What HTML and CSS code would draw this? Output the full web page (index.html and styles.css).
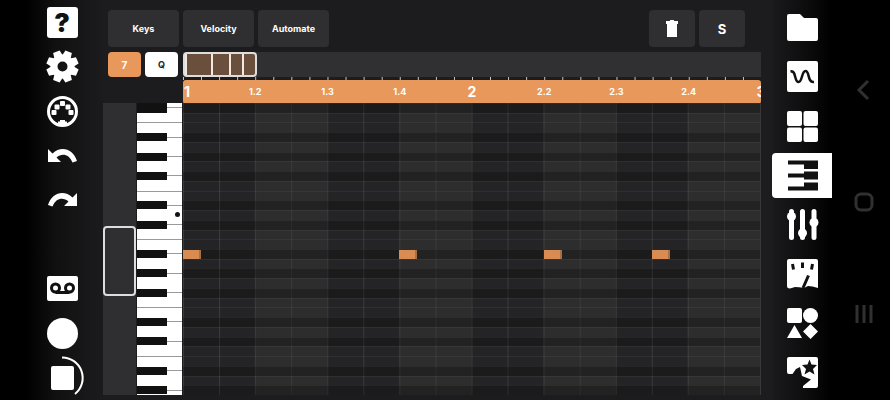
FILE: index.html
```
<!DOCTYPE html>
<html lang="en">
<head>
  <meta charset="UTF-8">
  <meta name="viewport" content="width=device-width, initial-scale=1">
  <title>Piano Roll</title>
  <link rel="stylesheet" href="styles.css">
</head>
<body>
  <div class="app">

    <nav class="tools" aria-label="Tools">
      <button aria-label="Help"><span class="help">?</span></button>
      <button aria-label="Settings">
        <svg viewBox="-15.500 -15.500 31 31">
          <circle class="line" r="8.500" stroke-width="7"/>
          <g id="teeth">
            <path id="tooth" transform="rotate(22.500)" d="M-4.500-10-3.500-16h7L4.500-10z"/>
            <use href="#tooth" transform="rotate(45)"/>
            <use href="#tooth" transform="rotate(90)"/>
            <use href="#tooth" transform="rotate(135)"/>
          </g>
          <use href="#teeth" transform="rotate(180)"/>
        </svg>
      </button>
      <button aria-label="MIDI">
        <svg viewBox="0 0 31 31">
          <circle class="line" cx="15.500" cy="15.500" r="14" stroke-width="3"/>
          <path d="M11 29v-3.500h2V24h5v1.500h2V29z"/>
          <rect x="13" y="5" width="5" height="5" rx="1"/>
          <rect x="7.500" y="8.500" width="5" height="5" rx="1"/>
          <rect x="18.500" y="8.500" width="5" height="5" rx="1"/>
          <rect x="4.500" y="14" width="5" height="5" rx="1"/>
          <rect x="21.500" y="14" width="5" height="5" rx="1"/>
        </svg>
      </button>
      <button aria-label="Undo">
        <svg viewBox="0 0 31 31"><path d="M1 9v13h13l-4.500-4.500c5-4.500 12.500-4 16 5l4.500-1.500C26 8.500 14 5.500 5.500 13.500z"/></svg>
      </button>
      <button aria-label="Redo">
        <svg viewBox="0 0 31 31"><path d="M30 9v13H17l4.500-4.500c-5-4.500-12.500-4-16 5L1 21C5 8.500 17 5.500 25.500 13.500z"/></svg>
      </button>
      <button class="tape" aria-label="Recordings">
        <svg viewBox="0 0 31 31">
          <rect y="3" width="31" height="25" rx="2"/>
          <g class="cut-line" stroke-width="3"><circle cx="8.500" cy="15" r="4"/><circle cx="22.500" cy="15" r="4"/><path d="M8.500 19.500h14"/></g>
        </svg>
      </button>
      <button class="record" aria-label="Record">
        <svg viewBox="0 0 31 31"><circle cx="15.500" cy="15.500" r="15.500"/></svg>
      </button>
      <button class="stop" aria-label="Stop">
        <svg viewBox="0 0 31 31"><rect x="4" y="4" width="23" height="24" rx="2"/><path class="line" stroke-width="2" d="M15-4.500A20.500 20.500 0 0 1 28 32"/></svg>
      </button>
    </nav>

    <main class="editor">
      <header class="actions">
        <button class="btn wide">Keys</button>
        <button class="btn wide">Velocity</button>
        <button class="btn wide">Automate</button>
        <button class="btn push" aria-label="Delete">
          <svg class="trash" viewBox="0 0 12 18"><path d="M4 0h4v1h4v3H0V1h4zM1 4h10v13H1z"/></svg>
        </button>
        <button class="btn">S</button>
      </header>

      <div class="overview">
        <button class="chip orange">7</button>
        <button class="chip">Q</button>
        <div class="overview-track">
          <div class="overview-window" id="overview"></div>
        </div>
      </div>

      <div class="ruler">
        <div class="ticks"></div>
        <div class="beats" id="beats"></div>
      </div>

      <div class="roll">
        <div class="scroll"><div class="scroll-thumb"></div></div>
        <div class="keys" id="keys"></div>
        <div class="grid" id="grid"></div>
      </div>
    </main>

    <nav class="views" aria-label="Views">
      <button aria-label="Files">
        <svg viewBox="0 0 31 31"><path d="M2 2h11l4 4h12q2 0 2 2v19q0 2-2 2H2q-2 0-2-2V4q0-2 2-2z"/></svg>
      </button>
      <button aria-label="Sample">
        <svg viewBox="0 0 31 31"><rect width="31" height="31" rx="2"/><path class="cut-line" stroke-width="2.500" d="M3.500 10.500c6-1.500 3.500 10.500 8 10.500 4 0 3-11 7-11 4.500 0 1.500 12 8.500 11"/></svg>
      </button>
      <button aria-label="Pads">
        <svg viewBox="0 0 31 31"><rect width="15" height="15" rx="2"/><rect x="16.500" width="14.500" height="15" rx="2"/><rect y="16.500" width="15" height="14.500" rx="2"/><rect x="16.500" y="16.500" width="14.500" height="14.500" rx="2"/></svg>
      </button>
      <button class="active" aria-label="Piano roll">
        <svg viewBox="0 0 31 31"><path class="cut" d="M1 .5h30V9H17V4.500H1zM1 13.500h16v-2h14v8H17v-2H1zM1 26.500h16v-4h14v8H1z"/></svg>
      </button>
      <button aria-label="Mixer">
        <svg viewBox="0 0 31 31">
          <path class="line" stroke-width="5" stroke-linecap="round" d="M4.500 2.500v26M15.500 2.500v26M27 2.500v26"/>
          <circle cx="4.500" cy="7.500" r="4.500"/><circle cx="15.500" cy="24" r="4.500"/><circle cx="27" cy="13.500" r="4.500"/>
        </svg>
      </button>
      <button aria-label="Effects">
        <svg viewBox="0 0 31 31"><path d="M2 1h27q2 0 2 2v27q-6-2-10-2l-4 2q-5-1-9-1l-5 1.500q-3 0-3-2.500V3q0-2 2-2z"/><path class="cut-line" stroke-width="3" d="M5.500 6l1 5.500M15.500 4.500v5.500M25.500 6l-1 5.500M21.500 17.500L16 30"/></svg>
      </button>
      <button aria-label="Instruments">
        <svg viewBox="0 0 31 31"><rect width="15" height="15" rx="2"/><circle cx="23.500" cy="7.500" r="7.500"/><path d="M7.500 17 15 30H0zM23.500 16 31 23.500 23.500 31 16 23.500z"/></svg>
      </button>
      <button aria-label="Presets">
        <svg viewBox="0 0 31 31"><path d="M2 0h27q2 0 2 2v27q0 2-2 2H16v-2l8-6.500-9-3.500-2-9-4 2-3.500 5H2q-2 0-2-2V2q0-2 2-2z"/><path class="cut" d="M22.500 2.500l2 5 5.500.5-4 4 1.500 5.500-5-3-5 3 1.500-5.500-4-4 5.500-.5z"/></svg>
      </button>
    </nav>

    <nav class="system" aria-label="System">
      <button aria-label="Back"><svg viewBox="0 0 20 20"><path d="M14 1 5 10l9 9"/></svg></button>
      <button aria-label="Home"><svg viewBox="0 0 20 20"><rect x="2" y="2" width="16" height="16" rx="5"/></svg></button>
      <button aria-label="Recents"><svg viewBox="0 0 20 20"><path d="M3 1v18M10 1v18M17 1v18"/></svg></button>
    </nav>

  </div>
  <script src="script.js"></script>
</body>
</html>
```
FILE: styles.css
```
* {
  box-sizing: border-box;
}
body {
  margin: 0;
  background: #000;
  color: #fff;
  font-family: Inter, "Liberation Sans", sans-serif;
  font-weight: 700;
}
button {
  display: flex;
  align-items: center;
  justify-content: center;
  padding: 0;
  border: 0;
  background: none;
  color: inherit;
  font: inherit;
  cursor: pointer;
}
svg {
  display: block;
  width: 31px;
  height: 31px;
  fill: #fff;
  overflow: visible;
}
.line {
  fill: none;
  stroke: #fff;
}
.cut {
  fill: #111;
}
.cut-line {
  fill: none;
  stroke: #111;
}
.app {
  display: grid;
  grid-template-columns: 103px 1fr 60px 58px;
  min-height: 100vh;
}

/* left tools */
.tools {
  display: grid;
  grid-template-rows: repeat(9, 1fr);
  padding-left: 21px;
  background: linear-gradient(90deg, #000 25%, #111112 55%, #1b1b1d);
}
.tape {
  grid-row: 7;
}
.record {
  grid-row: 8;
}
.stop {
  grid-row: 9;
}
.help {
  width: 31px;
  border-radius: 3px;
  background: #fff;
  color: #111;
  font-size: 26px;
  font-weight: 900;
  line-height: 31px;
}

/* editor */
.editor {
  display: flex;
  flex-direction: column;
  padding: 10px 11px 5px 0;
  background: #1c1c1e;
}
.actions {
  display: flex;
  gap: 4px;
  padding: 0 16px 5px 5px;
}
.btn {
  width: 46px;
  height: 37px;
  border-radius: 4px;
  background: #2f2f32;
  font-size: 13px;
}
.btn.wide {
  width: 71px;
  font-size: 9px;
}
.push {
  margin-left: auto;
}
.trash {
  width: 12px;
  height: 18px;
}
.overview {
  display: flex;
  gap: 4px;
  padding-left: 5px;
}
.chip {
  width: 33px;
  height: 25px;
  border-radius: 4px;
  background: #fff;
  color: #222;
  font-size: 9px;
}
.chip.orange {
  background: #e8985a;
  color: #fff;
  font-size: 10px;
}
.overview-track {
  flex: 1;
  margin-left: 1px;
  background: #303033;
}
.overview-window {
  display: grid;
  grid-template-columns: repeat(32, 1fr);
  width: 74px;
  height: 25px;
  border: 2px solid #ddd;
  border-radius: 4px;
  background: #6a4f3d;
}
.overview-window span {
  border-left: 2px solid #f2e8e0;
}
.ruler {
  margin-left: 80px;
}
.ticks {
  height: 3px;
  background: linear-gradient(90deg, #ccc 1px, transparent 1px) 0 0 / 3.125% 100%;
}
.beats {
  display: flex;
  height: 24px;
  overflow: hidden;
  border-radius: 3px;
  background: #e8985a;
  font-size: 9px;
  line-height: 24px;
}
.beats div {
  flex: 0 0 12.5%;
}
.beats span {
  display: inline-block;
  transform: translateX(-50%);
}
.beats div:first-child span {
  padding-left: 1px;
  transform: none;
}
.beats .bar {
  font-size: 14px;
}

/* piano roll */
.roll {
  display: grid;
  grid-template-columns: 33px 47px 1fr;
  flex: 1;
  min-height: 291px;
  margin-top: -1px;
}
.scroll {
  display: grid;
  grid-template-rows: 42fr 24fr 34fr;
  background: #2f2f32;
}
.scroll-thumb {
  grid-row: 2;
  border: 2px solid #ddd;
  border-radius: 4px;
}
.keys,
.grid {
  display: grid;
  grid-template-rows: repeat(30, 1fr);
}
.keys {
  margin: 0 1px;
  background: #fff;
}
.key {
  display: flex;
  align-items: center;
}
.key.split {
  border-top: 1px solid #999;
}
.key.black {
  background: linear-gradient(#999, #999) 0 50% / 100% 1px no-repeat;
}
.key.black::before {
  content: "";
  width: 30px;
  height: 8px;
  background: #111;
}
.key.black:first-child::before {
  height: 100%;
}
.key.marked::after {
  content: "";
  width: 5px;
  height: 5px;
  margin-left: auto;
  margin-right: 2px;
  border-radius: 50%;
  background: #111;
}
.grid {
  border-right: 1px solid #38383a;
  background:
    linear-gradient(90deg, #3b3b3c 1px, transparent 1px) 0 0 / 6.25% 100%,
    linear-gradient(90deg, #242426 50%, #2d2d2e 50%) 0 0 / 25% 100%;
}
.row {
  display: grid;
  grid-template-columns: repeat(32, 1fr);
  border-top: 1px solid rgba(255, 255, 255, 0.05);
}
.row.black {
  background: rgba(0, 0, 0, 0.24);
}
.note {
  border-right: 2px solid #a96f45;
  background: #d98b54;
}

/* right side */
.views {
  display: grid;
  grid-template-rows: repeat(8, 1fr);
  padding: 3px 0;
  background: linear-gradient(90deg, #1a1a1c, #0c0c0d 60%, #000);
}
.views button {
  margin: 2px 0;
}
.views .active {
  border-radius: 4px 0 0 4px;
  background: #fff;
}
.system {
  display: grid;
  grid-template-rows: repeat(3, 112px);
  align-content: center;
  padding: 4px 0 0 6px;
}
.system svg {
  width: 20px;
  height: 20px;
  fill: none;
  stroke: #303030;
  stroke-width: 3;
}
```
FILE: script.js
```
const ROWS = 30;
const BLACK_ROWS = [0, 3, 5, 7, 10, 12, 15, 17, 19, 22, 24, 27, 29];
const MARKED_ROW = 11;
const NOTE_ROW = 15;
const NOTES = [1, 13, 21, 27]; // half-step columns, 32 per view
const BEATS = ["1", "1.2", "1.3", "1.4", "2", "2.2", "2.3", "2.4", "3"];

function add(parent, tag, className) {
  const el = document.createElement(tag);
  if (className) el.className = className;
  parent.appendChild(el);
  return el;
}

const keys = document.getElementById("keys");
const grid = document.getElementById("grid");

for (let i = 0; i < ROWS; i++) {
  const black = BLACK_ROWS.includes(i);
  const key = add(keys, "div", black ? "key black" : "key");
  // two white keys with no black key between them
  if (!black && i > 0 && !BLACK_ROWS.includes(i - 1)) key.classList.add("split");
  if (i === MARKED_ROW) key.classList.add("marked");

  const row = add(grid, "div", black ? "row black" : "row");
  if (i === NOTE_ROW) {
    NOTES.forEach(n => {
      add(row, "div", "note").style.gridColumn = n;
    });
  }
}

NOTES.forEach(n => {
  add(document.getElementById("overview"), "span").style.gridColumn = n;
});

BEATS.forEach(label => {
  const cell = add(document.getElementById("beats"), "div");
  add(cell, "span", label.length === 1 ? "bar" : "").textContent = label;
});
```
